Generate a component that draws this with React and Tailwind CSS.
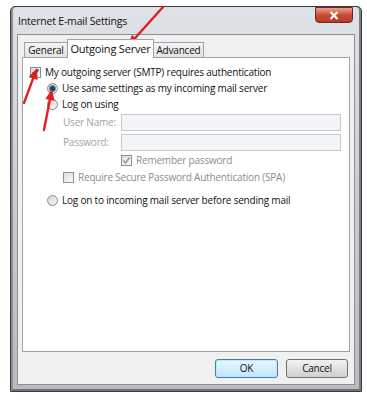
import React from "react";

const font = { fontFamily: '"Open Sans", "Noto Sans", sans-serif' };

const Check = ({ checked, disabled }) => (
  <span className="w-[11px] h-[11px] border border-[#8f8f8f] bg-gradient-to-br from-[#dcdcdc] to-[#fbfbfb] flex items-center justify-center shrink-0">
    {checked && (
      <svg width="9" height="9" viewBox="0 0 9 9">
        <path d="M1.5 4.5 L3.5 7 L7.5 1.5" fill="none" stroke={disabled ? "#9a9a9a" : "#2d4d7a"} strokeWidth="1.6" />
      </svg>
    )}
  </span>
);

const Radio = ({ checked }) => (
  <span className="w-[11px] h-[11px] rounded-full border border-[#8a8a8a] bg-gradient-to-br from-[#d2d2d2] to-[#f8f8f8] flex items-center justify-center shrink-0">
    {checked && <span className="w-[5px] h-[5px] rounded-full bg-[#1f3f6f] ring-1 ring-[#6d8fbf]"></span>}
  </span>
);

const Arrow = ({ x1, y1, x2, y2 }) => {
  const a = Math.atan2(y2 - y1, x2 - x1);
  const l = 12;
  const p1 = [x2 - l * Math.cos(a - 0.4), y2 - l * Math.sin(a - 0.4)];
  const p2 = [x2 - l * Math.cos(a + 0.4), y2 - l * Math.sin(a + 0.4)];
  const bx = x2 - (l - 2) * Math.cos(a);
  const by = y2 - (l - 2) * Math.sin(a);
  return (
    <g>
      <line x1={x1} y1={y1} x2={bx} y2={by} stroke="#e0201c" strokeWidth="2.4" strokeLinecap="round" />
      <polygon points={`${x2},${y2} ${p1[0]},${p1[1]} ${p2[0]},${p2[1]}`} fill="#e0201c" />
    </g>
  );
};

export default function App() {
  return (
    <div className="relative w-[367px] h-[400px] bg-white overflow-hidden text-[10px] tracking-[-0.2px] text-[#111] font-medium" style={font}>
      <div className="absolute left-0 top-0 w-full h-full pt-[6px] pl-[10px]">
        <div className="w-[352px] h-[386px] flex flex-col rounded-t-[5px] border border-[#3a3a3a] shadow-[inset_2px_0_0_#8d9096,inset_-2px_0_0_#7a7e84,inset_0_-2px_0_#6f7378] bg-gradient-to-b from-[#dfe2e6] via-[#c9cdd2] to-[#b8bcc1]">
          <div className="h-[27px] flex items-start justify-between">
            <span className="mt-[7px] ml-[7px] text-[10.5px] text-[#111]">Internet E-mail Settings</span>
            <div className="mr-[8px] w-[38px] h-[16px] rounded-b-[4px] border border-[#6b2a22] bg-gradient-to-b from-[#e8a290] via-[#c94c38] to-[#b63a26] flex items-center justify-center">
              <svg width="10" height="9" viewBox="0 0 10 9">
                <path d="M1.5 1 L8.5 8 M8.5 1 L1.5 8" stroke="white" strokeWidth="2" />
              </svg>
            </div>
          </div>
          <div className="flex-1 mx-[6px] mb-[6px] border border-[#8a9096] bg-[#f0f0f0] flex flex-col px-[4px] pt-[4px]">
            <div className="flex items-end h-[19px] pl-[2px]">
              <div className="h-[16px] w-[44px] border border-b-0 border-[#9ea3a8] bg-gradient-to-b from-[#f4f4f4] to-[#e2e2e2] flex items-center justify-center">General</div>
              <div className="h-[19px] w-[87px] border border-b-0 border-[#9ea3a8] bg-white flex items-center justify-center -ml-px relative z-10 text-[11px]">Outgoing Server</div>
              <div className="h-[16px] w-[50px] border border-b-0 border-l-0 border-[#9ea3a8] bg-gradient-to-b from-[#f4f4f4] to-[#e2e2e2] flex items-center justify-center">Advanced</div>
            </div>
            <div className="h-[295px] -mt-px border border-[#9ea3a8] bg-white pl-[7px] pt-[7px] pr-[8px]">
              <div className="flex items-center gap-[4px] h-[14px]">
                <Check checked />
                <span>My outgoing server (SMTP) requires authentication</span>
              </div>
              <div className="pl-[17px] mt-[2px]">
                <div className="flex items-center gap-[4px] h-[14px]">
                  <Radio checked />
                  <span>Use same settings as my incoming mail server</span>
                </div>
                <div className="flex items-center gap-[4px] h-[14px] mt-[2px]">
                  <Radio />
                  <span>Log on using</span>
                </div>
                <div className="pl-[16px] text-[#a3a3a3] font-normal">
                  <div className="flex items-center mt-[3px] h-[17px]">
                    <span className="w-[58px] whitespace-nowrap">User Name:</span>
                    <div className="flex-1 h-[17px] border border-[#c3c9cf] bg-[#f3f4f5]"></div>
                  </div>
                  <div className="flex items-center mt-[3px] h-[17px]">
                    <span className="w-[58px] whitespace-nowrap">Password:</span>
                    <div className="flex-1 h-[17px] border border-[#c3c9cf] bg-[#f3f4f5]"></div>
                  </div>
                  <div className="flex items-center gap-[4px] h-[14px] mt-[2px] pl-[58px]">
                    <Check checked disabled />
                    <span className="text-[#8d8d8d]">Remember password</span>
                  </div>
                  <div className="flex items-center gap-[4px] h-[14px] mt-[3px]">
                    <Check />
                    <span className="text-[#8d8d8d]">Require Secure Password Authentication (SPA)</span>
                  </div>
                </div>
                <div className="flex items-center gap-[4px] h-[14px] mt-[9px]">
                  <Radio />
                  <span>Log on to incoming mail server before sending mail</span>
                </div>
              </div>
            </div>
            <div className="flex justify-end gap-[8px] mt-[7px] pr-[2px]">
              <button className="w-[63px] h-[19px] rounded-[3px] border border-[#3c7fb1] bg-gradient-to-b from-[#eaf6fd] to-[#bee6fd] shadow-[inset_0_0_0_1px_#c4e5f6]">OK</button>
              <button className="w-[62px] h-[19px] rounded-[3px] border border-[#707070] bg-gradient-to-b from-[#f2f2f2] to-[#d0d0d0]">Cancel</button>
            </div>
          </div>
        </div>
      </div>
      <svg className="absolute left-0 top-0 pointer-events-none" width="367" height="400">
        <Arrow x1={163} y1={7} x2={128} y2={46} />
        <Arrow x1={24} y1={103} x2={37} y2={68} />
        <Arrow x1={44} y1={130} x2={52} y2={89} />
      </svg>
    </div>
  );
}
